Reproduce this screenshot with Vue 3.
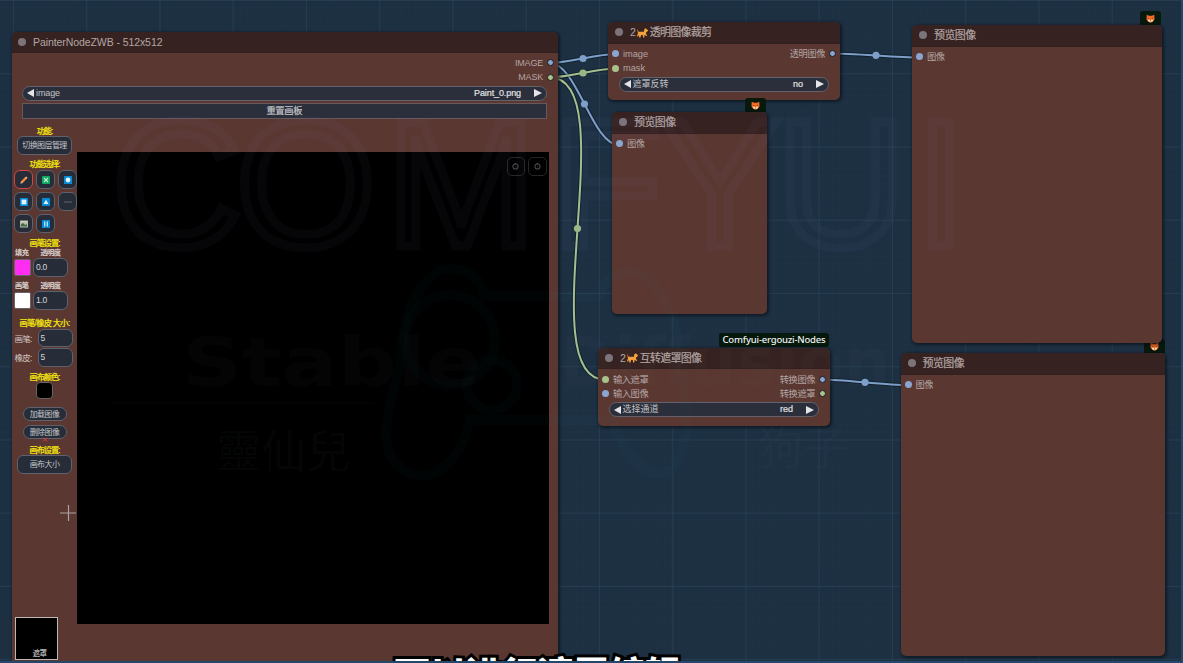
<script setup>
const previews = [
  { id: 'p1', cls: 'preview-a' },
  { id: 'p2', cls: 'preview-b' },
  { id: 'p3', cls: 'preview-c' },
]
const tools = ['pencil', 'erase', 'circle', 'square', 'triangle', 'line', 'picture', 'bars']
const wires = [
  { d: 'M550 63 C566 63 599 54 615 54', x: 583, y: 58.5, c: 'blue' },
  { d: 'M550 63 C577 63 592 145 619 145', x: 584.5, y: 104, c: 'blue' },
  { d: 'M550 77.5 C566 77.5 599 68.5 615 68.5', x: 583, y: 73, c: 'green' },
  { d: 'M550 77.5 C626 77.5 529 379.5 605 379.5', x: 577.5, y: 228.5, c: 'green' },
  { d: 'M832 53.5 C854 53.5 898 57.5 920 57.5', x: 876, y: 55.3, c: 'blue' },
  { d: 'M822 379.5 C843 379.5 886 385.3 908 385.3', x: 865, y: 382.3, c: 'blue' },
]
</script>

<template>
  <main class="board">
    <svg class="wires" viewBox="0 0 1183 663">
      <g v-for="w in wires" :key="w.d" :class="w.c">
        <path class="under" :d="w.d" />
        <path class="over" :d="w.d" />
        <circle :cx="w.x" :cy="w.y" r="3.6" />
      </g>
    </svg>

    <section class="node painter">
      <header><i class="dot"></i><span class="latin">PainterNodeZWB - 512x512</span></header>
      <div class="slots">
        <div class="slot"><span class="out caps">IMAGE</span><i class="pin blue ring"></i></div>
        <div class="slot"><span class="out caps">MASK</span><i class="pin green ring"></i></div>
      </div>
      <div class="combo"><i class="tri left"></i><span>image</span><b>Paint_0.png</b><i class="tri right"></i></div>
      <div class="reset"><span>重置画板</span></div>
      <div class="work">
        <aside>
          <h4 class="first">功能:</h4>
          <button class="wide">切换图层管理</button>
          <h4 class="choose">功能选择:</h4>
          <div class="tools">
            <button v-for="t in tools" :key="t" :class="{ active: t === 'pencil' }">
              <svg viewBox="0 0 10 10">
                <template v-if="t === 'pencil'">
                  <path d="M2.4 7.6 7.4 2.5" stroke="#ee8b4c" stroke-width="2.3" />
                  <path d="M6.7 2 8 3.3" stroke="#f7b38c" stroke-width="1.4" />
                  <path d="M1.4 8.7 2 6.8 3.3 8z" fill="#f0d5a5" />
                </template>
                <template v-else-if="t === 'erase'">
                  <rect x="1" y="1" width="8" height="8" rx=".8" fill="#10a961" />
                  <path d="M3 3 7 7M7 3 3 7" stroke="#bff2d5" stroke-width="1.1" />
                </template>
                <template v-else-if="t === 'line'">
                  <path d="M1 5H9" stroke="#656373" stroke-width="1" />
                </template>
                <template v-else-if="t === 'picture'">
                  <rect x="1" y="1.5" width="8" height="7" fill="#b6bda9" />
                  <path d="M1.8 7.6V5.4L4 4 6 6 7.5 5 8.4 7.6z" fill="#3f6b48" />
                  <path d="M2 2.6H8" stroke="#d9d3bf" />
                </template>
                <template v-else>
                  <rect x="1" y="1" width="8" height="8" rx=".5" fill="#078ad4" />
                  <circle v-if="t === 'circle'" cx="5" cy="5" r="2.4" fill="#e2f4ff" />
                  <rect v-if="t === 'square'" x="2.6" y="2.6" width="4.8" height="4.8" fill="#dff3ff" />
                  <path v-if="t === 'triangle'" d="M5 2.7 7.5 7H2.5z" fill="#e2f4ff" />
                  <path v-if="t === 'bars'" d="M3.7 2.5V7.5M6.3 2.5V7.5" stroke="#a9e0fb" stroke-width="1.4" />
                </template>
              </svg>
            </button>
          </div>
          <h4 class="brush">画笔设置:</h4>
          <div class="caption"><span>填充</span><span>透明度</span></div>
          <div class="pair"><i class="swatch pink"></i><div class="field">0.0</div></div>
          <div class="caption second"><span>画笔</span><span>透明度</span></div>
          <div class="pair second"><i class="swatch white"></i><div class="field">1.0</div></div>
          <h4 class="size">画笔/橡皮 大小:</h4>
          <div class="sizes"><span>画笔:</span><div class="field">5</div></div>
          <div class="sizes"><span>橡皮:</span><div class="field">5</div></div>
          <h4 class="colour">画布颜色:</h4>
          <i class="swatch black"></i>
          <button class="pill load">加载图像</button>
          <button class="pill drop">删除图像<i class="cross"><svg viewBox="0 0 6 6"><path d="M.7.7 5.3 5.3M5.3.7.7 5.3" stroke="#e83a3a" stroke-width="1.2" /></svg></i></button>
          <h4 class="setup">画布设置:</h4>
          <button class="wide last">画布大小</button>
          <div class="thumb"><span>遮罩</span></div>
        </aside>
        <div class="canvas">
          <i v-for="n in 2" :key="n"><svg viewBox="0 0 8 8"><circle cx="4" cy="4" r="2.3" /><path d="M3.2 1.8 4.6 1M4.6 4.2h-.8" /></svg></i>
        </div>
      </div>
    </section>

    <section class="node crop">
      <header><i class="dot"></i><span class="num">2</span>
        <svg class="dog" viewBox="0 0 12 12"><path d="M1.3 1.2C.2 3.5 1.5 5 2.6 5H7.2L7.6 2.4 9 1.4 10.6 2.5 11.7 3.7 10.5 5 9.6 5.4 9.5 7.4 10.8 9 9.6 9.4 8 8 7.6 11H6.4L6 8.3 4.3 8.4 3.6 11H2.3L2.1 8.3.9 10.3 0 9.5 1.1 6.2C.2 4.7.3 2.4 1.3 1.2z" /></svg>
        <span class="title long">透明图像裁剪</span></header>
      <div class="slots">
        <div class="slot"><i class="pin blue"></i><span class="in latin-in">image</span><span class="out">透明图像</span><i class="pin blue ring"></i></div>
        <div class="slot"><i class="pin green"></i><span class="in latin-in">mask</span></div>
      </div>
      <div class="combo"><i class="tri left"></i><span class="cjk">遮罩反转</span><b>no</b><i class="tri right"></i></div>
    </section>

    <div v-for="p in previews" :key="p.id" class="group" :class="p.cls">
      <div class="tag">
        <svg viewBox="0 0 10 10"><path d="M.8.7 3.5 2H6.5L9.2.7 9.5 5.8 7.5 8.5 5 9.6 2.5 8.5.5 5.8z" fill="#f16b28" /><path d="M1.6 6.4 3.6 6 5 7.2 6.4 6 8.4 6.4 7.2 8.4 5 9.3 2.8 8.4z" fill="#ffd8a8" /><path d="M3 4.5v1M7 4.5v1M4.5 7.8h1" stroke="#52230f" stroke-width=".8" /></svg>
      </div>
      <section class="node preview">
        <header><i class="dot"></i><span class="title">预览图像</span></header>
        <div class="slots"><div class="slot"><i class="pin blue"></i><span class="in">图像</span></div></div>
      </section>
    </div>

    <div class="label">Comfyui-ergouzi-Nodes</div>
    <section class="node convert">
      <header><i class="dot"></i><span class="num">2</span>
        <svg class="dog" viewBox="0 0 12 12"><path d="M1.3 1.2C.2 3.5 1.5 5 2.6 5H7.2L7.6 2.4 9 1.4 10.6 2.5 11.7 3.7 10.5 5 9.6 5.4 9.5 7.4 10.8 9 9.6 9.4 8 8 7.6 11H6.4L6 8.3 4.3 8.4 3.6 11H2.3L2.1 8.3.9 10.3 0 9.5 1.1 6.2C.2 4.7.3 2.4 1.3 1.2z" /></svg>
        <span class="title long">互转遮罩图像</span></header>
      <div class="slots">
        <div class="slot"><i class="pin green"></i><span class="in">输入遮罩</span><span class="out">转换图像</span><i class="pin blue ring"></i></div>
        <div class="slot"><i class="pin blue"></i><span class="in">输入图像</span><span class="out">转换遮罩</span><i class="pin green ring"></i></div>
      </div>
      <div class="combo"><i class="tri left"></i><span class="cjk">选择通道</span><b>red</b><i class="tri right"></i></div>
    </section>

    <svg class="watermark" viewBox="0 0 1183 663">
      <g class="neon">
        <text x="112" y="246">C</text><text x="236" y="246">O</text>
        <text x="386" y="246">M</text><text x="552" y="246">F</text>
        <text x="660" y="246">Y</text><text x="776" y="246">U</text>
        <text x="916" y="246">I</text>
      </g>
      <text class="stable" x="182" y="386" textLength="300" lengthAdjust="spacingAndGlyphs">Stable</text>
      <text class="stable" x="560" y="386" textLength="330" lengthAdjust="spacingAndGlyphs">Diffusion</text>
      <text class="brushy" x="216" y="468" textLength="135">靈仙兒</text>
      <text class="wide-sign" x="493" y="465">AUD</text>
      <text class="brushy" x="758" y="465">狗子</text>
      <g class="pad">
        <path d="M400 365C402 310 420 282 440 270 468 266 480 276 484 296H600C606 270 640 262 656 288 680 310 690 400 685 440 675 490 635 485 612 420H470C455 485 405 490 388 450 382 420 395 390 400 365z" />
        <circle cx="450" cy="340" r="45" /><circle cx="492" cy="385" r="25" />
      </g>
      <path class="rule" d="M110 403H375" />
    </svg>
    <svg class="pointer" viewBox="0 0 16 16"><path d="M8.5 0V16M0 8H16" /></svg>
    <div class="subtitle">可以进行遮罩编辑</div>
  </main>
</template>

<style>
html, body { margin: 0; overflow: hidden; }
</style>

<style scoped>
* { box-sizing: border-box; }
i { font-style: normal; display: block; }
.board {
  position: relative; width: 1183px; height: 663px; overflow: hidden;
  font-family: "Liberation Sans", "Noto Sans CJK SC", sans-serif; color: #b3a5a3;
  background-color: #1d3042;
  background-image:
    linear-gradient(90deg, rgba(70,105,130,.2) 1px, transparent 1px),
    linear-gradient(rgba(70,105,130,.2) 1px, transparent 1px),
    linear-gradient(90deg, rgba(30,65,100,.08) 1px, transparent 1px),
    linear-gradient(rgba(30,65,100,.08) 1px, transparent 1px);
  background-size: 73.25px 73.25px, 73.25px 73.25px, 7.325px 7.325px, 7.325px 7.325px;
  background-position: 13px 0, 0 0, 13px 0, 0 0;
  border-right: 2px solid #24486a; border-bottom: 2px solid #24486a;
}
.wires, .watermark { position: absolute; left: 0; top: 0; width: 1183px; height: 663px; pointer-events: none; }
.wires path { fill: none; }
.under { stroke: rgba(10,20,28,.55); stroke-width: 4; }
.over { stroke-width: 2; }
.wires .blue .over { stroke: #7d9fc9; } .wires .blue circle { fill: #7d9fc9; }
.wires .green .over { stroke: #a3bf91; } .wires .green circle { fill: #98b986; }

.node { position: absolute; background: #5a3731; border-radius: 5px; box-shadow: 1px 1px 3px 1px rgba(5,12,18,.6); overflow: hidden; }
.node header { height: 21.5px; background: #362321; display: flex; align-items: center; padding-left: 7px; font-size: 11px; white-space: nowrap; border-bottom: 1px solid #30201f; }
.dot { width: 8px; height: 8px; border-radius: 50%; background: #7b747a; flex: none; margin-right: 7px; }
.title { font-size: 11px; letter-spacing: -.6px; line-height: 14px; position: relative; -webkit-text-stroke: .2px #b3a5a3; }
.title.long { letter-spacing: -.75px; margin-left: 1px; }
.preview .title { margin-left: 0; }
.num { font-size: 10.5px; margin-left: 0; }
.dog { width: 11.5px; height: 11.5px; fill: #f1a23b; margin-left: 1.5px; }
.slots { padding-top: 3px; }
.slot { height: 14.6px; display: flex; align-items: center; padding: 0 4px; font-size: 9.3px; line-height: 14px; }
.pin { width: 7px; height: 7px; border-radius: 50%; flex: none; }
.pin.blue { background: #8aa5cf; } .pin.green { background: #aac38a; }
.pin.ring { border: 1.2px solid #191d23; }
.in { margin-left: 4px; letter-spacing: -.5px; position: relative; top: .6px; }
.latin-in { letter-spacing: -.05px; top: 0; }
.out { margin-left: auto; margin-right: 4px; letter-spacing: -.5px; position: relative; top: .6px; }
.caps { letter-spacing: -.2px; margin-right: 4px; font-size: 9px; top: 0; }
.combo { height: 15px; margin: 1px 11px 0 10.5px; border: 1px solid #62626c; border-radius: 8px; background: #2a2f3b; display: flex; align-items: center; font-size: 9px; line-height: 13px; color: #c2c1c5; padding: 0 4px; }
.combo span { margin-left: 2px; letter-spacing: -.1px; } .combo .cjk { letter-spacing: 0; }
.combo b { font-weight: 400; color: #e1e1e3; margin: 0 13px 0 auto; -webkit-text-stroke: .2px #e1e1e3; }
.painter .combo b { margin-right: 13px; letter-spacing: -.1px; }
.tri { border: 4px solid transparent; }
.tri.left { border-left: 0; border-right: 7px solid #e5e5e8; }
.tri.right { border-right: 0; border-left: 8px solid #e5e5e8; }

.painter { left: 12px; top: 32px; width: 546px; height: 640px; border-radius: 5px 5px 0 0; }
.painter header { height: 20.5px; }
.painter header .dot { margin-left: -1px; }
.latin { font-size: 10.5px; letter-spacing: -.08px; }
.painter .combo { margin: 1px 11px 0 10px; }
.reset { margin: 2.5px 11.5px 0 10px; height: 15.5px; border: 1px solid #67595b; background: #2a2f3b; color: #c5c5c9; font-size: 9.3px; line-height: 14px; text-align: center; letter-spacing: -.4px; -webkit-text-stroke: .2px #c5c5c9; }
.work { display: flex; height: 550px; }
aside { width: 65px; padding-top: 7.3px; display: flex; flex-direction: column; align-items: center; flex: none; }
h4 { margin: 0; height: 10px; line-height: 12px; font-size: 8.2px; letter-spacing: -1px; color: #f3e50f; white-space: nowrap; font-weight: 500; -webkit-text-stroke: .2px #f3e50f; flex: none; }
button { padding: 0; font-family: inherit; border: 1px solid #5e626d; background: #262c38; color: #c3c4c8; }
.wide { width: 55px; height: 19px; border-radius: 6px; font-size: 8px; letter-spacing: -.6px; line-height: 17px; white-space: nowrap; flex: none; }
.choose { margin-top: 4.5px; }
.tools { width: 63px; margin: 1px -1px 0 1px; display: grid; grid-template-columns: repeat(3, 19px); gap: 3px; flex: none; }
.tools button { width: 19px; height: 19px; border-radius: 6px; display: grid; place-items: center; }
.tools svg { width: 10px; height: 10px; display: block; }
.tools .active { border-color: #cf4941; }
.brush { margin-top: 5px; }
.caption { width: 61px; height: 8px; line-height: 9px; font-size: 7.2px; letter-spacing: -.5px; color: #ddd4d2; display: flex; padding-left: 1px; font-weight: 500; -webkit-text-stroke: .2px #ddd4d2; flex: none; }
.caption span:last-child { margin-left: 12px; }
.caption.second { margin-top: 4px; }
.pair { width: 61px; margin-top: 2px; height: 19px; display: flex; align-items: center; gap: 2px; flex: none; }
.swatch { width: 17px; height: 17px; border: 1px solid #6a6469; border-radius: 2px; flex: none; }
.pink { background: #ff2df2; } .white { background: #fff; }
.black { background: #000; border: 1.5px solid #69635f; border-radius: 4px; }
.field { width: 35px; height: 19px; border: 1px solid #5e626d; border-radius: 6px; background: #262c38; font-size: 8.5px; line-height: 17px; color: #d5d5d8; padding-left: 2px; letter-spacing: -.3px; }
.size { margin-top: 8px; letter-spacing: -.65px; }
.sizes { width: 60px; height: 19.2px; display: flex; align-items: center; justify-content: space-between; font-size: 8.5px; letter-spacing: -.7px; color: #cfc5c3; flex: none; }
.sizes .field { height: 18.5px; margin-right: 2px; }
.colour { margin-top: 4.7px; }
.pill { width: 44px; height: 14.5px; border-radius: 7px; font-size: 8px; line-height: 13px; letter-spacing: -.6px; flex: none; position: relative; white-space: nowrap; }
.load { margin-top: 8px; } .drop { margin-top: 3.5px; }
.cross { position: absolute; left: 18px; top: 11.5px; width: 6px; height: 5px; }
.cross svg { display: block; width: 6px; height: 5px; }
.setup { margin-top: 5.5px; }
.last { margin-top: .5px; }
.thumb { width: 43px; height: 43px; border: 1px solid #bdb6b2; background: #000; margin: 143.4px auto 0 2.5px; flex: none; display: flex; align-items: flex-end; justify-content: center; font-size: 7.5px; line-height: 9px; color: #dcdcdc; padding: 0 0 1px 7px; letter-spacing: -.5px; }
.canvas { width: 472px; height: 472px; background: #000; margin-top: 33.5px; display: flex; justify-content: flex-end; gap: 3px; padding: 5px 2.5px; }
.canvas i { width: 18.5px; height: 18.5px; border: 1px solid #262626; border-radius: 5px; display: grid; place-items: center; }
.canvas svg { width: 9px; height: 9px; fill: none; stroke: #4b4b4b; stroke-width: .9; }

.crop { left: 608px; top: 22px; width: 232px; height: 78px; }
.convert { left: 598px; top: 347.5px; width: 232px; height: 78.5px; }
.group { position: absolute; }
.group .node { position: relative; width: 100%; height: calc(100% - 14px); }
.tag { width: 21px; height: 14px; margin-left: auto; margin-right: .5px; background: #07180d; border-radius: 3px 3px 1px 1px; display: grid; place-items: center; }
.tag svg { width: 9px; height: 9px; }
.preview-a { left: 912px; top: 11px; width: 249.5px; height: 331.5px; z-index: 1; }
.preview-b { left: 612px; top: 98px; width: 154.5px; height: 216px; }
.preview-c { left: 900.5px; top: 339px; width: 264.5px; height: 316.5px; }
.label { position: absolute; left: 719px; top: 332.5px; width: 110px; height: 14.5px; background: #07180d; border-radius: 3px; font: 500 9.5px/14px "Noto Sans", sans-serif; letter-spacing: -.2px; color: #eef1ee; text-align: center; white-space: nowrap; }

.watermark { z-index: 2; }
.neon { font: 180px "Liberation Sans", sans-serif; fill: none; stroke: rgba(165,155,230,.034); stroke-width: 9; }
.stable { font: bold 68px "DejaVu Sans", sans-serif; fill: rgba(190,190,190,.025); }
.brushy { font: 45px "Noto Sans CJK TC", sans-serif; fill: rgba(150,170,180,.038); }
.wide-sign { font: bold 38px "DejaVu Sans", sans-serif; fill: rgba(190,190,190,.025); }
.pad { fill: none; stroke: rgba(50,190,150,.022); stroke-width: 10; }
.rule { stroke: rgba(190,190,190,.03); }
.pointer { position: absolute; left: 60px; top: 505px; width: 16px; height: 16px; z-index: 3; }
.pointer path { stroke: #aaa3a0; stroke-width: 1.2; }
.subtitle { position: absolute; z-index: 4; left: 394px; top: 650px; font: 900 36px/44px "Noto Sans CJK SC", sans-serif; letter-spacing: -.1px; color: #fff; -webkit-text-stroke: 6px #000; paint-order: stroke fill; white-space: nowrap; }
</style>
